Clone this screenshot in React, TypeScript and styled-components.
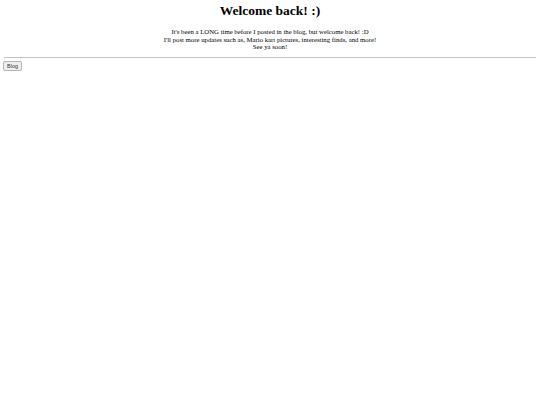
import styled, { createGlobalStyle } from "styled-components";

const GlobalStyle = createGlobalStyle`
   body {
      margin: 4px 3px;
      background: #ffffff;
      color: #000000;
      font-family: "Liberation Serif", "Times New Roman", serif;
   }
`;

const App = () => {
   return (
      <>
         <GlobalStyle />
         <Header>
            <Title>Welcome back! :)</Title>
            <Message>
               It's been a LONG time before I posted in the blog, but welcome back! :D
               <br />
               I'll post more updates such as, Mario kart pictures, interesting finds, and more!
               <br />
               See ya soon!
            </Message>
         </Header>
         <Divider />
         <NavButton>Blog</NavButton>
      </>
   );
};

export default App;

const Header = styled.header`
   text-align: center;
`;

const Title = styled.h1`
   margin: -1px 0 9px;
   font-size: 13.5px;
   line-height: 16px;
   font-weight: bold;
`;

const Message = styled.p`
   margin: 0;
   font-size: 6.75px;
   line-height: 7.5px;
`;

const Divider = styled.hr`
   margin: 6px 1px 3px;
   border: none;
   border-top: 1px solid #c4c4c4;
`;

const NavButton = styled.button`
   display: block;
   padding: 1px 3px;
   font-family: "Liberation Sans", Arial, sans-serif;
   font-size: 5.5px;
   line-height: 6px;
   color: #333333;
   background: #efefef;
   border: 1px solid #b5b5b5;
   border-radius: 2px;
`;
